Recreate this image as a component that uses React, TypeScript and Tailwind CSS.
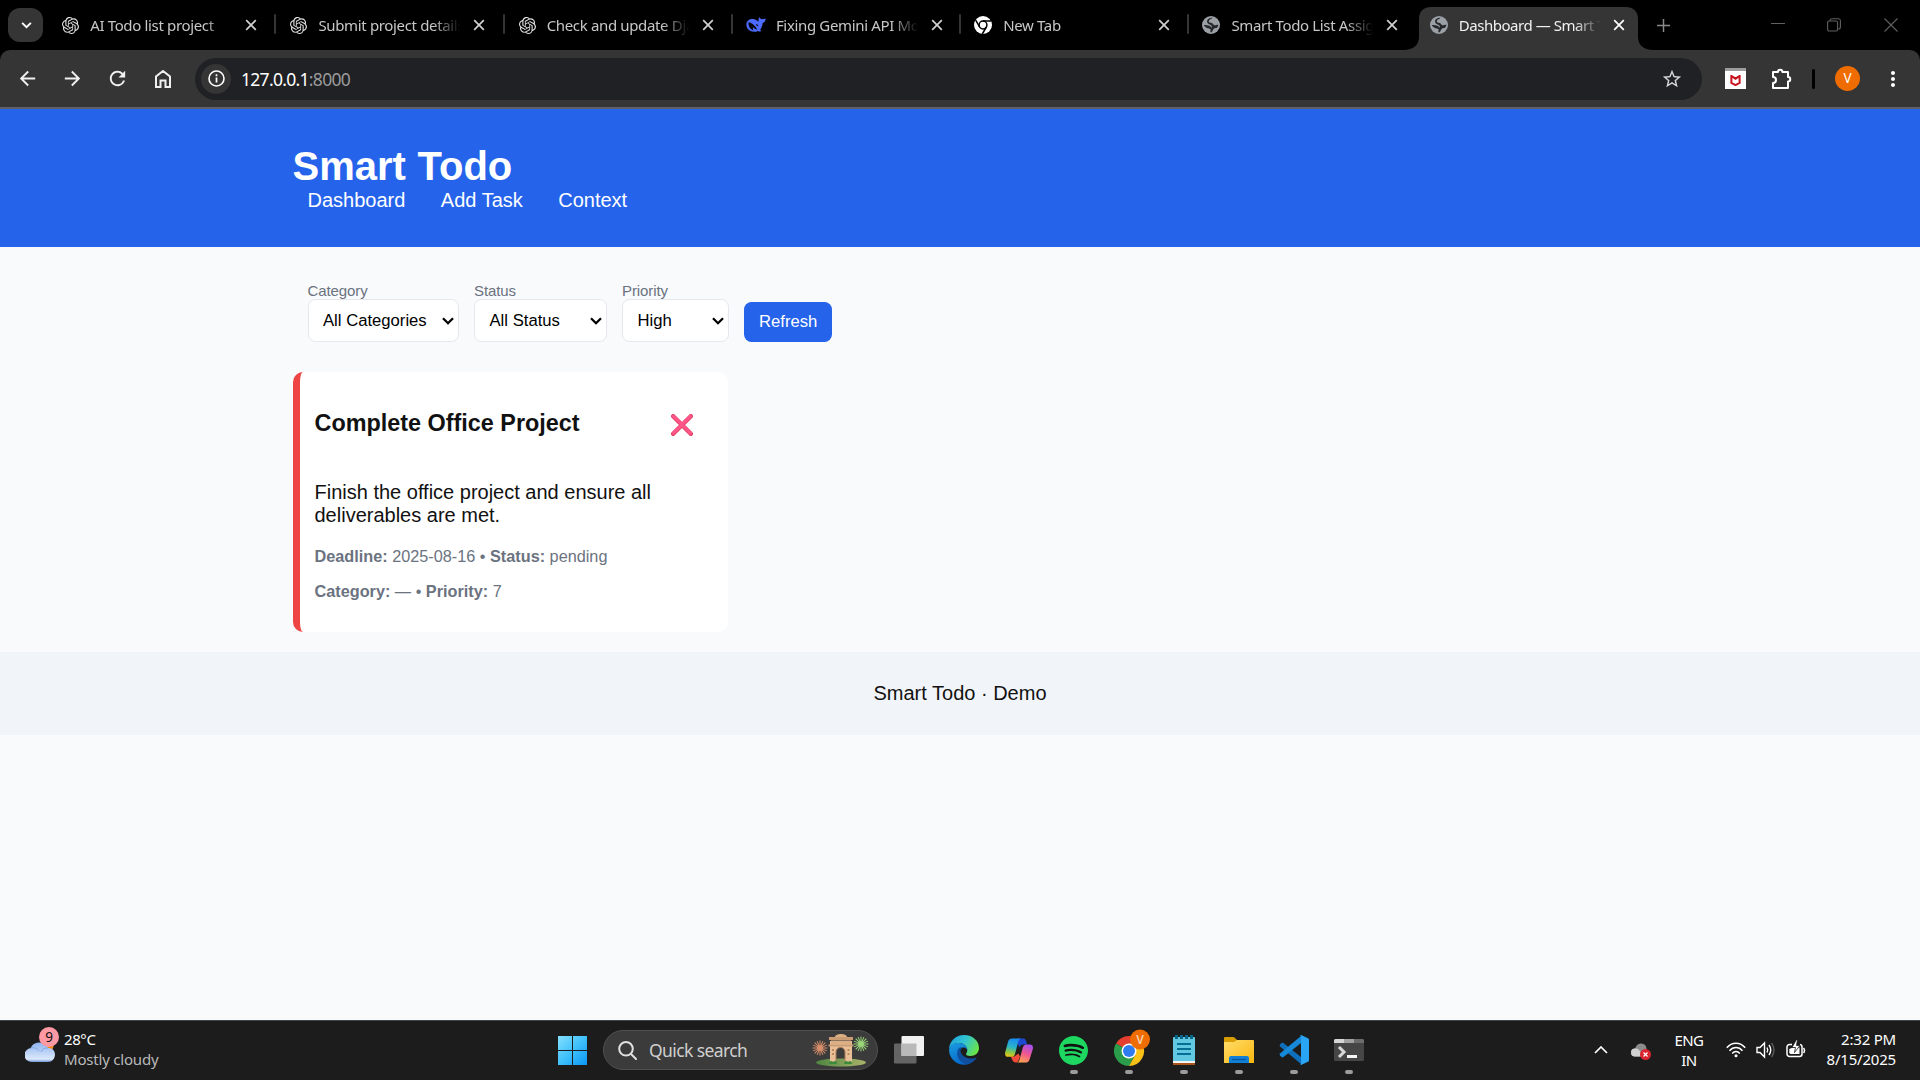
import React from "react";
import { SiOpenai, SiSpotify } from "react-icons/si";
import { MdArrowBack, MdArrowForward, MdRefresh, MdStarBorder, MdMoreVert } from "react-icons/md";

function GlobeIcon() {
  return (
    <svg viewBox="0 0 18 18" className="h-[18px] w-[18px]">
      <circle cx="9" cy="9" r="9" fill="#9aa0a6" />
      <path
        d="M10.500 1.800C9.500 3.500 7 3.200 6.800 5.200c-.1 1.600 1.700 1.400 2.900 1.800 1.500.5 1.600 2.200 3.100 2.200 1.300 0 2-.8 3.600-.5-.2 1.200-.8 2.500-1.600 3.300-1.600-.2-2.500.3-3.400 1.200-.9 1-.7 2.300-2.200 3.200-.9-.2-1-.9-.7-1.700.3-1.100-.3-1.700-1.400-2.100C5 12 3 11.300 1.700 9.200c1.700-.5 3.300-.3 4.800.3 1.300.5 2.400.9 3.300 2.200.5-1.300-.3-2.300-1.500-2.900C6.700 8 4.900 7.400 5 5.300 5.100 3 8 1.500 10.500 1.800z"
        fill="#26282b"
      />
    </svg>
  );
}

function WhaleIcon() {
  return (
    <svg viewBox="0 0 20 18" className="h-[18px] w-5">
      <path d="M.4 8.200C.6 4.500 4.200 2.300 8.400 3.300c1.700.4 2.500 1.200 3.800 2.500.5-1.500.3-3.200 1.100-4.700.5 1.100 1.300 1.900 2.500 2.100 1.300.1 2.200-.7 3.900-.4-.2 2.200-1.300 3.700-3 4.300-.3 3-1.200 5-2.700 6.800.6.400 1.400.6 1.500 1.200-1.100.6-2.400.4-3.500-.2C6.500 17.400.1 14.300.4 8.200z" fill="#4d6bfe" />
      <path d="M2.600 6.300c3.200.1 6.600 3.600 8.800 7.300-2.300.1-3.200-1-4.100-2.300-.8 1-.5 2.300.3 3.300-3.300-1.200-5.700-4.500-5-8.300z" fill="#07080f" />
      <path d="M9.600 8.300c1.300-.3 2.400.4 2.800 1.700l-1 .2z" fill="#07080f" />
    </svg>
  );
}

function ChromeMono() {
  return (
    <svg viewBox="0 0 18 18" className="h-[18px] w-[18px]">
      <circle cx="9" cy="9" r="9" fill="#fff" />
      <circle cx="9" cy="9" r="3.900" fill="none" stroke="#000" strokeWidth="1.500" />
      <path d="M9 5.100h8M5.600 11 1.700 4.200M12.400 11 8.300 18" stroke="#000" strokeWidth="1.500" />
    </svg>
  );
}

function Cross({ className }: { className: string }) {
  return (
    <svg viewBox="0 0 12 12" className={className} fill="none" stroke="currentColor" strokeWidth="1.700">
      <path d="M1.200 1.200l9.600 9.600M10.800 1.200l-9.600 9.600" />
    </svg>
  );
}

const tabs = [
  { title: "AI Todo list project", icon: "openai" },
  { title: "Submit project details", icon: "openai" },
  { title: "Check and update Dja", icon: "openai" },
  { title: "Fixing Gemini API Mo", icon: "whale" },
  { title: "New Tab", icon: "chrome" },
  { title: "Smart Todo List Assig", icon: "globe" },
  { title: "Dashboard — Smart T", icon: "globe", active: true },
];

function TabIcon({ kind }: { kind: string }) {
  if (kind === "openai") return <SiOpenai className="h-[17px] w-[17px] text-[#e3e3e3]" />;
  if (kind === "whale") return <WhaleIcon />;
  if (kind === "chrome") return <ChromeMono />;
  return <GlobeIcon />;
}

function TabStrip() {
  return (
    <div className="flex h-[50px] bg-black">
      <div className="flex w-[47.200px] shrink-0 pl-2 pt-2">
        <div className="flex h-[34px] w-[35px] items-center justify-center rounded-xl bg-[#353535]">
          <svg viewBox="0 0 12 8" className="ml-px h-[7px] w-[11px]" fill="none" stroke="#fff" strokeWidth="2.200">
            <path d="M1 1l5 5 5-5" />
          </svg>
        </div>
      </div>
      {tabs.map((t, i) => (
        <div key={t.title} className="relative flex h-[50px] w-[228.250px] shrink-0">
          {t.active && (
            <svg viewBox="0 0 250 43" className="absolute left-[-13px] top-[7px] h-[43px] w-[250px]">
              <path d="M0 43c9 0 15-5 15-13V12C15 4 20 0 27 0h195c8 0 12 5 12 12v18c0 8 6 13 15 13z" fill="#353535" />
            </svg>
          )}
          <div className={"relative flex h-[50px] flex-1 items-center " + (t.active ? "pl-[13px]" : t.icon === "openai" ? "pl-[15px]" : "pl-[14px]")}>
            <span className={"flex shrink-0 " + (t.icon === "openai" ? "w-7" : t.icon === "whale" ? "w-[30px]" : "w-[29px]")}>
              <TabIcon kind={t.icon} />
            </span>
            <span
              className={
                "w-[149px] shrink-0 whitespace-nowrap font-['Noto_Sans','Open_Sans',sans-serif] text-[15px] [mask-image:linear-gradient(to_right,black_115px,transparent_142px)] " +
                (t.active ? "tracking-[-0.450px] text-[#f1f1f1]" : "tracking-[-0.350px] text-[#c7c7c7]")
              }
            >
              {t.title}
            </span>
            <Cross className={"h-3 w-3 shrink-0 " + (t.active ? "ml-[5px] text-white" : "ml-[6px] text-[#d0d0d0]")} />
          </div>
          {i < 5 && <div className="absolute right-[-1px] top-[14px] h-5 w-[2px] rounded bg-[#353535]" />}
        </div>
      ))}
      <div className="flex flex-1 items-center text-[#8a8a8a]">
        <svg viewBox="0 0 14 14" className="ml-3 h-[13px] w-[13px]" stroke="currentColor" strokeWidth="1.600">
          <path d="M7 0v14M0 7h14" />
        </svg>
        <svg viewBox="0 0 14 14" className="ml-[101px] h-[14px] w-[14px]" stroke="#606060" strokeWidth="1">
          <path d="M0 5.500h14" />
        </svg>
        <svg viewBox="0 0 14 14" className="ml-[42px] h-[14px] w-[14px]" fill="none" stroke="#606060" strokeWidth="1.100">
          <rect x=".6" y="3" width="10" height="10" rx="1.500" />
          <path d="M3 3V2.500A2 2 0 0 1 5 .7h6.500A2 2 0 0 1 13.400 2.500V9a2 2 0 0 1-2 2" />
        </svg>
        <svg viewBox="0 0 14 14" className="ml-[43px] h-[14px] w-[14px]" fill="none" stroke="#606060" strokeWidth="1.100">
          <path d="M.5.500l13 13M13.500.500l-13 13" />
        </svg>
      </div>
    </div>
  );
}

function Toolbar() {
  return (
    <div className="bg-black">
      <div className="flex h-[57px] items-center rounded-t-[10px] bg-[#353535] text-white">
        <div className="flex w-[195px] shrink-0 items-center pl-[16px] text-[#f0f0f0]">
          <MdArrowBack className="mr-[22px] h-[23px] w-[23px]" />
          <MdArrowForward className="mr-[22px] h-[23px] w-[23px]" />
          <MdRefresh className="mr-[22px] h-[23px] w-[23px]" />
          <svg viewBox="0 0 16 18" className="ml-[3.500px] h-[18px] w-4" fill="none" stroke="currentColor" strokeWidth="2">
            <path d="M1 17V6.500L8 1l7 5.500V17h-4.500v-6.500h-5V17z" />
          </svg>
        </div>
        <div className="flex h-[42px] w-[1507px] shrink-0 items-center rounded-full bg-[#202124] pl-[6px]">
          <div className="flex h-[30px] w-[30px] items-center justify-center rounded-full bg-[#353535]">
            <svg viewBox="0 0 17 17" className="h-[17px] w-[17px]">
              <circle cx="8.500" cy="8.500" r="7.500" fill="none" stroke="#fff" strokeWidth="1.600" />
              <path d="M8.500 7.600v5M8.500 4.300v1.900" stroke="#fff" strokeWidth="1.700" />
            </svg>
          </div>
          <span className="ml-[10px] mt-[2px] w-[1420px] font-['Noto_Sans','Open_Sans',sans-serif] text-[17.500px] tracking-[-0.700px] text-white">
            127.0.0.1<span className="text-[#9a9a9a]">:8000</span>
          </span>
          <MdStarBorder className="h-[22px] w-[22px] text-[#d5d5d5]" />
        </div>
        <div className="ml-[23px] flex h-[21px] w-[21px] items-center justify-center border-t-[3px] border-[#9d9d9d] bg-white">
          <svg viewBox="0 0 12 12" className="h-[11px] w-[11px]" fill="none" stroke="#c8141e" strokeWidth="2.200">
            <path d="M1.500 1v7.500L6 11l4.500-2.500V1L6 4z" />
          </svg>
        </div>
        <svg viewBox="0 0 22 22" className="ml-[24px] h-[22px] w-[22px]" fill="none" stroke="#fff" strokeWidth="2" strokeLinejoin="round">
          <path d="M3 4h5a2.200 2.200 0 0 1 4.400 0H18v5a2.200 2.200 0 0 1 0 4.500V20H3v-5a3 3 0 0 0 0-6z" />
        </svg>
        <div className="ml-[20px] h-5 w-[3px] rounded bg-black" />
        <div className="ml-[20px] flex h-[25px] w-[25px] items-center justify-center rounded-full bg-[#ef6c00] font-['Noto_Sans',sans-serif] text-[13.500px] text-white">V</div>
        <MdMoreVert className="ml-[20.500px] h-6 w-6 text-white" />
      </div>
      <div className="h-[2px] bg-[#5e6168]" />
    </div>
  );
}

function Select({ label, value, width }: { label: string; value: string; width: string }) {
  return (
    <div className={"mr-[15px] shrink-0 " + width}>
      <div className="h-[17px] text-[15px] leading-[17px] tracking-[-0.100px] text-[#6b7280]">{label}</div>
      <div className="flex h-[43px] items-center justify-between rounded-[7.500px] border border-[#e5e7eb] bg-white pl-[14.500px] pr-1 text-[16.667px] text-black">
        <span>{value}</span>
        <svg viewBox="0 0 12 8" className="h-2 w-3" fill="none" stroke="#000" strokeWidth="2.300">
          <path d="M1 1.200l5 5 5-5" />
        </svg>
      </div>
    </div>
  );
}

function Page() {
  return (
    <div className="flex h-[911px] flex-col bg-[#f8fafc] font-['Liberation_Sans',Arial,sans-serif] text-xl leading-[23px] text-[#111]">
      <header className="h-[138px] bg-[#2563eb] pt-[35px] text-white">
        <div className="mx-auto w-[1335px]">
          <h1 className="text-[40px] font-bold leading-[45px] [word-spacing:0.500px]">Smart Todo</h1>
          <nav className="flex pl-[15px]">
            <a className="mr-[35.500px]">Dashboard</a>
            <a className="mr-[35.500px]">Add Task</a>
            <a>Context</a>
          </nav>
        </div>
      </header>
      <main className="mx-auto h-[405px] w-[1335px]">
        <div className="flex items-end pl-[15px] pt-[35px]">
          <Select label="Category" value="All Categories" width="w-[151.500px]" />
          <Select label="Status" value="All Status" width="w-[133px]" />
          <Select label="Priority" value="High" width="w-[107px]" />
          <button className="h-10 rounded-[7.500px] bg-[#2563eb] px-[15px] pb-[2px] text-[16.667px] text-white">Refresh</button>
        </div>
        <section className="mt-[30px] grid grid-cols-3 gap-[15px]">
          <article className="h-[260px] rounded-[10px] border-l-[7px] border-[#ef4444] bg-white pl-[15px] pt-[38px]">
            <div className="flex justify-between pr-[35px]">
              <h3 className="text-[23.400px] font-bold leading-[27px]">Complete Office Project</h3>
              <svg viewBox="0 0 22 22" className="mt-1 h-[22px] w-[22px]">
                <path d="M2.200 2.200l17.600 17.600M19.800 2.200l-17.600 17.600" stroke="#df3d5e" strokeWidth="4.400" strokeLinecap="round" />
                <path d="M2.400 2.200l17 17M19.600 2.200l-17 17" stroke="#ff5689" strokeWidth="3.200" strokeLinecap="round" />
              </svg>
            </div>
            <p className="mt-[44px] w-[370px]">Finish the office project and ensure all deliverables are met.</p>
            <p className="mt-[19px] text-[16.250px] leading-5 text-[#6b7280]">
              <b>Deadline:</b> 2025-08-16 • <b>Status:</b> pending
            </p>
            <p className="mt-[15px] text-[16.250px] leading-5 text-[#6b7280]">
              <b>Category:</b> — • <b>Priority:</b> 7
            </p>
          </article>
        </section>
      </main>
      <footer className="flex h-[83px] items-center justify-center bg-[#f1f5f9]">Smart Todo · Demo</footer>
    </div>
  );
}

function WeatherIcon() {
  return (
    <svg viewBox="0 0 34 36" className="h-9 w-[34px]">
      <defs>
        <linearGradient id="cloud" x1="0" y1="0" x2="0" y2="1">
          <stop offset="0" stopColor="#8fb4f0" />
          <stop offset="0.850" stopColor="#dbe8fb" />
          <stop offset="1" stopColor="#6f94d4" />
        </linearGradient>
      </defs>
      <circle cx="22" cy="19" r="6.500" fill="#f5860f" />
      <path d="M7 35a7 7 0 0 1-1-14C7 17 11 15.500 15 15.500c4.500 0 7 2.500 8 5.500 4-.5 7 2.500 7 6.500s-3 7.500-7 7.500z" fill="url(#cloud)" />
      <path d="M5.500 21c4-1 7 .5 8.500 3M16 25c1-3 4-4.500 7-4" stroke="#84a8e4" fill="none" />
      <circle cx="24" cy="10" r="10" fill="#ff99a4" />
      <text x="24" y="15" textAnchor="middle" fontSize="13.500" fontFamily="Noto Sans" fill="#111">9</text>
    </svg>
  );
}

const burst = [0, 22.5, 45, 67.5, 90, 112.5, 135, 157.5];

function Burst({ x, y, color }: { x: number; y: number; color: string }) {
  return (
    <g stroke={color} strokeWidth="1">
      {burst.map((a) => (
        <path key={a} d={`M${x - 7.5} ${y}h15`} transform={`rotate(${a} ${x} ${y})`} />
      ))}
      <circle cx={x} cy={y} r="2.500" fill={color} />
    </g>
  );
}

function GateArt() {
  return (
    <svg viewBox="0 0 58 34" className="h-[34px] w-[58px]">
      <defs>
        <linearGradient id="grass">
          <stop offset="0" stopColor="#4d8540" />
          <stop offset="1" stopColor="#aab56a" />
        </linearGradient>
      </defs>
      <ellipse cx="29" cy="29.500" rx="25" ry="4" fill="url(#grass)" />
      <Burst x={8} y={15} color="#d98f6b" />
      <Burst x={49} y={11} color="#9bd67a" />
      <path d="M18 29V8h22v21h-7V19a4.500 4.500 0 0 0-9 0v10z" fill="#e8bf97" />
      <path d="M24 29V19a4.500 4.500 0 0 1 9 0v10" fill="none" stroke="#a87a55" />
      <path d="M17 4h24v3H17zM16.500 11.500h25v2h-25z" fill="#c99c74" />
      <path d="M19 7.500h20v4H19zM23 4c0-4 12-4 12 0z" fill="#dcae84" />
      <path d="M20 17h2M35.500 17h2M20 21h2M35.500 21h2" stroke="#b8875d" strokeWidth="2" />
      <path d="M17 31c0-3 3-4 4-2 2-2 4-1 4 2zM32 31c0-3 3-4 4-2 2-2 4-1 4 2z" fill="#3c8b3d" />
    </svg>
  );
}

function WindowsIcon() {
  return (
    <svg viewBox="0 0 29 29" className="h-[29px] w-[29px]">
      <defs>
        <linearGradient id="win" x1="0" y1="0" x2="1" y2="1">
          <stop offset="0" stopColor="#86e0ff" />
          <stop offset="0.500" stopColor="#3fc1fb" />
          <stop offset="1" stopColor="#0b97f5" />
        </linearGradient>
      </defs>
      <path d="M0 0h14v14H0zM15 0h14v14H15zM0 15h14v14H0zM15 15h14v14H15z" fill="url(#win)" />
    </svg>
  );
}

function TaskViewIcon() {
  return (
    <svg viewBox="0 0 30 30" className="h-[30px] w-[30px]">
      <rect x="0" y="8.500" width="22.500" height="20" rx="1" fill="#646464" />
      <rect x="7.500" y="1" width="22.500" height="20" rx="1" fill="#f1f1f1" />
      <path d="M7.500 8.500h15V21h-15z" fill="#b9b9b9" />
    </svg>
  );
}

function EdgeIcon() {
  return (
    <svg viewBox="0 0 30 30" className="h-[30px] w-[30px]">
      <defs>
        <linearGradient id="edgeTop" x1="0" y1="0.200" x2="1" y2="0.600">
          <stop offset="0" stopColor="#1fa2e0" />
          <stop offset="0.500" stopColor="#32c5cf" />
          <stop offset="1" stopColor="#6be545" />
        </linearGradient>
        <linearGradient id="edgeLow" x1="0" y1="0" x2="0.400" y2="1">
          <stop offset="0" stopColor="#1b9de2" />
          <stop offset="1" stopColor="#0669c9" />
        </linearGradient>
      </defs>
      <path d="M0 14C.5 6 7 0 15 0c9 0 15 6 15 13 0 5-4 8-8.500 8-3 0-4.500-1-4.500-2 0-.8 1.300-1.500 1.300-4 0-4-4-7-8.300-7C5 8 1.500 11 0 14z" fill="url(#edgeTop)" />
      <path d="M0 15C1 10.500 5 8 9.500 8c5 0 8.800 3 8.800 7-1-2-2.500-2.500-4-2.500-2 0-3.500 2-3.500 5 0 6 5 10 11.200 10.500A15 15 0 0 1 0 15z" fill="url(#edgeLow)" />
      <path d="M9 14.500c-3 6 1.500 14 9.500 14.800 4-.8 7.500-3.500 9.500-7-2 1-4.500 1.500-7 1.200-5.500-.5-9-4-9.500-7.500-.2-2 .3-3 1.500-4-1.500 0-3 .8-4 2.500z" fill="#104f9f" />
    </svg>
  );
}

function CopilotIcon() {
  return (
    <svg viewBox="0 0 28 24" className="h-[25px] w-7">
      <defs>
        <linearGradient id="copA" x1="0.400" y1="0" x2="0.200" y2="1">
          <stop offset="0" stopColor="#1a8df0" />
          <stop offset="0.450" stopColor="#2ab4c9" />
          <stop offset="0.750" stopColor="#8fc83f" />
          <stop offset="1" stopColor="#f5c218" />
        </linearGradient>
        <linearGradient id="copB" x1="0.700" y1="0" x2="0.300" y2="1">
          <stop offset="0" stopColor="#a650ee" />
          <stop offset="0.500" stopColor="#f0588f" />
          <stop offset="1" stopColor="#ffa44d" />
        </linearGradient>
      </defs>
      <path d="M12 0h6c2.700 0 3 2 3.600 4l.7 2h-4c-2.500 0-3.300 1.500-3.800 3L13 6z" fill="#1c49cf" />
      <path d="M5.500 18h3.700l4.300-3 1.500 3-1.500 4c-.6 1.400-1.200 2-2.500 2-3.700 0-3.500-3.500-5.500-6z" fill="#ee4b3a" />
      <path d="M7 0h9.500c-2 0-2.700 1.500-3.200 3L10 15.500C9.300 17.500 8.500 18.300 6.500 18.300H3c-2.700 0-3.300-2.300-2.700-4.800L3 3.500C3.600 1.300 4.700 0 7 0z" fill="url(#copA)" />
      <path d="M21 24h-9.500c2 0 2.600-1 3.100-3L17.800 9c.7-2 1.700-3 3.700-3H25c2.500 0 3.500 2 2.700 5l-3 9.500C24 22.800 23.300 24 21 24z" fill="url(#copB)" />
    </svg>
  );
}

function ChromeIcon() {
  return (
    <svg viewBox="0 0 36 37" className="mb-[6px] ml-[6px] h-[37px] w-9">
      <path d="M15 22 2 14.500A15 15 0 0 1 28 14.500H15z" fill="#e43e2f" />
      <path d="M15 22h0L2 14.500A15 15 0 0 0 15 37l6.500-11.500z" fill="#2b9c49" />
      <path d="M15 14.500h13A15 15 0 0 1 15 37l6.500-11.500z" fill="#fbc116" />
      <circle cx="15" cy="22" r="7.500" fill="#fff" />
      <circle cx="15" cy="22" r="6" fill="#2f7cf0" />
      <circle cx="26" cy="10.500" r="10" fill="#ef6c00" />
      <text x="26" y="15" textAnchor="middle" fontSize="12" fontFamily="Noto Sans" fill="#f6cfac" fontWeight="600">V</text>
    </svg>
  );
}

function NotepadIcon() {
  return (
    <svg viewBox="0 0 22 30" className="h-[30px] w-[22px]">
      <rect x="0" y="2" width="22" height="26" rx="1" fill="#62c8e2" />
      <path d="M0 26h22v2H0z" fill="#f4f4f4" />
      <path d="M0 28h22v1.500q0 .5-1 .5H1q-1 0-1-.5z" fill="#a9541a" />
      <path d="M4 9h14M4 14h14M4 19h14" stroke="#046f93" strokeWidth="2" />
      <path d="M3.500 0v4M8.500 0v4M13.500 0v4M18.500 0v4" stroke="#07678a" strokeWidth="3" />
    </svg>
  );
}

function FolderIcon() {
  return (
    <svg viewBox="0 0 30 28" className="h-7 w-[30px]">
      <defs>
        <linearGradient id="fold" x1="0" y1="0" x2="1" y2="1">
          <stop offset="0" stopColor="#ffdc6b" />
          <stop offset="1" stopColor="#fbb70d" />
        </linearGradient>
      </defs>
      <path d="M0 8V2q0-1 1-1h8q1 0 2 1l2 2v4z" fill="#d99d05" />
      <path d="M0 6h10l3-2h16q1 0 1 1v22H0z" fill="url(#fold)" />
      <path d="M5 27v-5q0-2 2-2h16q2 0 2 2v5z" fill="#1180d4" />
      <path d="M8 23.500h14" stroke="#0a549f" strokeWidth="1.300" />
    </svg>
  );
}

function CodeIcon() {
  return (
    <svg viewBox="0 0 30 30" className="h-[30px] w-[30px]">
      <path d="M1 9.500 2.500 8q1-.8 2 0L22 22v7L1 11.500q-.8-1 0-2z" fill="#0f6fbd" />
      <path d="M1 20.500 2.500 22q1 .8 2 0L22 8V1L1 18.500q-.8 1 0 2z" fill="#1689d8" />
      <path d="M22 0l7 3.200q1 .5 1 1.500v20.600q0 1-1 1.500L22 30q-1 .2-1.500-.5 1.500.7 1.500-1V1.500q0-1.700-1.500-1Q21-.2 22 0z" fill="#2aa5f5" />
    </svg>
  );
}

function TerminalIcon() {
  return (
    <svg viewBox="0 0 30 22" className="h-[22px] w-[30px]">
      <rect width="30" height="22" rx="1.500" fill="#464646" />
      <path d="M1.500 0H10v4H0V1.500Q0 0 1.500 0z" fill="#d6d6d6" />
      <path d="M10 0h10v4H10z" fill="#a2a2a2" />
      <path d="M20 0h8.500Q30 0 30 1.500V4H20z" fill="#6c6c6c" />
      <path d="M5 8l5 5-5 5" stroke="#d8d8d8" strokeWidth="3" fill="none" />
      <path d="M13 17.500h10" stroke="#f5f5f5" strokeWidth="3" />
    </svg>
  );
}

function AppSlot({ children, running }: { children: React.ReactNode; running?: boolean }) {
  return (
    <div className="flex h-[59px] w-[55px] shrink-0 flex-col items-center">
      <div className="flex h-[49px] items-center pt-[9px]">{children}</div>
      {running && <div className="h-1 w-2 rounded-full bg-[#9b9b9b]" />}
    </div>
  );
}

function Taskbar() {
  return (
    <div className="flex h-[60px] border-t border-[#3f464b] bg-[#1c1c1c] font-['Noto_Sans','Open_Sans',sans-serif] text-[15px] leading-5 tracking-[-0.300px] text-white">
      <div className="flex w-[558px] shrink-0 pl-[25px] pt-[6px]">
        <WeatherIcon />
        <div className="ml-[5px] mt-[2px]">
          <div className="tracking-[-0.400px]">28°C</div>
          <div className="tracking-[-0.200px] text-[#b9b9b9]">Mostly cloudy</div>
        </div>
      </div>
      <div className="flex w-[45px] shrink-0 pt-[15px]">
        <WindowsIcon />
      </div>
      <div className="mt-[9px] flex h-10 w-[275px] shrink-0 items-center rounded-full border border-[#505050] bg-[#3b3b3b] pl-[14px]">
        <svg viewBox="0 0 19 19" className="h-[19px] w-[19px]" fill="none" stroke="#e0e0e0" strokeWidth="2" strokeLinecap="round">
          <circle cx="8" cy="7.800" r="6.800" />
          <path d="M13 13l5 5" />
        </svg>
        <span className="ml-[12px] w-[163px] text-[17.500px] tracking-[-0.600px] text-[#cfcfcf]">Quick search</span>
        <GateArt />
      </div>
      <div className="ml-[3px] flex">
        <AppSlot><TaskViewIcon /></AppSlot>
        <AppSlot><EdgeIcon /></AppSlot>
        <AppSlot><CopilotIcon /></AppSlot>
        <AppSlot running>
          <div className="rounded-full bg-[#111]"><SiSpotify className="h-[29px] w-[29px] text-[#1ed760]" /></div>
        </AppSlot>
        <AppSlot running><ChromeIcon /></AppSlot>
        <AppSlot running><NotepadIcon /></AppSlot>
        <AppSlot running><FolderIcon /></AppSlot>
        <AppSlot running><CodeIcon /></AppSlot>
        <AppSlot running><TerminalIcon /></AppSlot>
      </div>
      <div className="ml-auto flex h-[58px] items-center pr-[24px]">
        <svg viewBox="0 0 14 8" className="h-2 w-[14px]" fill="none" stroke="#fff" strokeWidth="1.700">
          <path d="M1 7l6-6 6 6" />
        </svg>
        <svg viewBox="0 0 20 18" className="ml-[23px] mt-[3px] h-[18px] w-5">
          <path d="M4 13.500a4 4 0 0 1 0-8C6 1 8 .5 10.500.500a5.500 5.500 0 0 1 5 5v8z" fill="#8c8c8c" />
          <path d="M4 13.500a4 4 0 0 1 0-8c3-.5 5.500 2 8 8z" fill="#d0d0d0" />
          <circle cx="14.500" cy="11.500" r="5.500" fill="#d9232e" />
          <path d="M12.500 9.500l4 4M16.500 9.500l-4 4" stroke="#fff" strokeWidth="1.200" />
        </svg>
        <div className="ml-[20px] mt-[-1px] w-[36px] text-center text-[15px] tracking-[-0.600px]">
          <div>ENG</div>
          <div>IN</div>
        </div>
        <svg viewBox="0 0 20 16" className="ml-[19px] mt-[-1px] h-4 w-5" fill="none" stroke="#fff" strokeWidth="1.500">
          <path d="M.8 5.800c5-6 13.400-6 18.400 0M3.500 8.700c3.700-4.300 9.300-4.300 13 0M6.200 11.400c2.200-2.600 5.400-2.600 7.600 0" />
          <circle cx="10" cy="13.700" r="1.500" fill="#fff" stroke="none" />
        </svg>
        <svg viewBox="0 0 20 18" className="ml-[10px] h-[18px] w-5" fill="none" stroke="#fff" strokeWidth="1.400">
          <path d="M1 6.500h3L8.500 2v14L4 11.500H1z" />
          <path d="M11 6.500q1.500 2.500 0 5M13 4q3.500 5 0 10" />
          <path d="M15.500 2q5 7 0 14" stroke="#5a5a5a" />
        </svg>
        <svg viewBox="0 0 20 18" className="ml-[10px] mt-[-3px] h-[18px] w-5" fill="none" stroke="#fff" strokeWidth="1.500">
          <path d="M6 4.500H3.500A2.500 2.500 0 0 0 1 7v7.000a2.500 2.500 0 0 0 2.500 2.500h10A2.500 2.500 0 0 0 16 14V7a2.500 2.500 0 0 0-2-2.500" />
          <path d="M3.300 13V9L7 7.500h6.500V14h-9z" fill="#fff" stroke="none" />
          <path d="M17.500 8q2 2.500 0 5" />
          <path d="M10.500-.5L6 7.500h3.500L8.500 12.500 14 5.500h-3.500L11.500-.5z" fill="#fff" stroke="#1c1c1c" strokeWidth=".8" />
        </svg>
        <div className="ml-[12px] mt-[-3px] w-[78px] text-right tracking-[-0.200px]">
          <div>2:32 PM</div>
          <div>8/15/2025</div>
        </div>
      </div>
    </div>
  );
}

export default function App() {
  return (
    <div className="flex h-[1080px] w-[1920px] flex-col overflow-hidden">
      <TabStrip />
      <Toolbar />
      <Page />
      <Taskbar />
    </div>
  );
}
